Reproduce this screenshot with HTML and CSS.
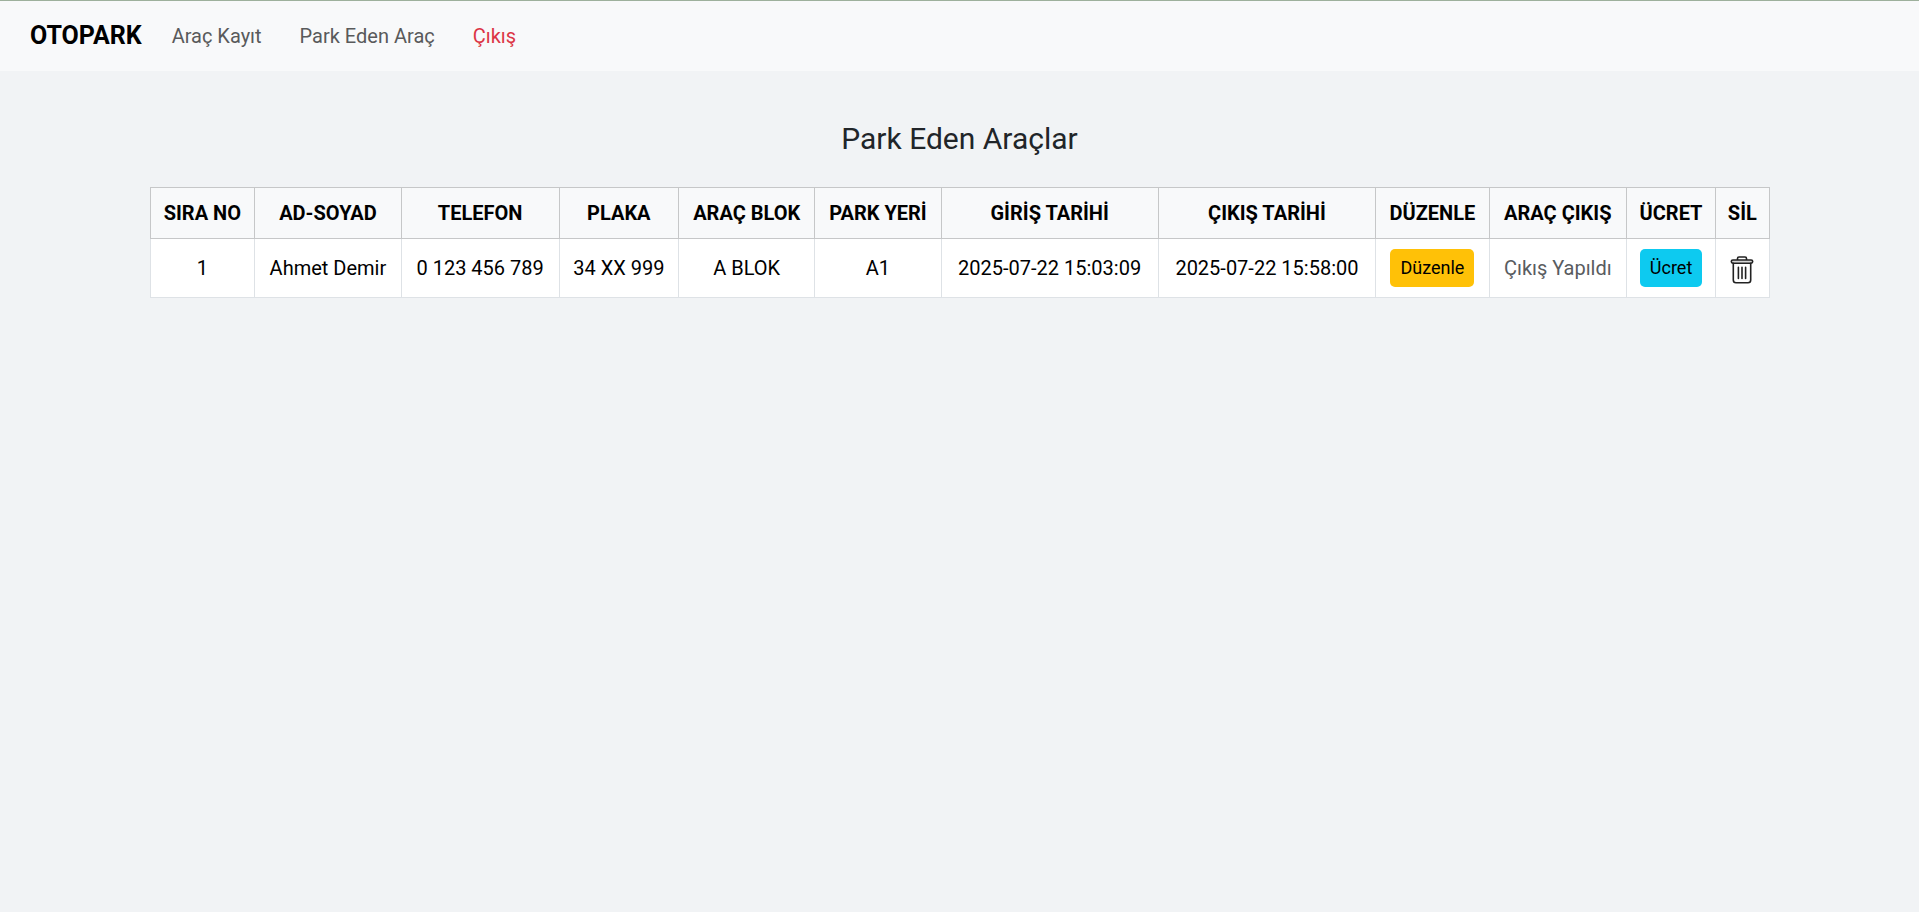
FILE: index.html
```html
<!DOCTYPE html>
<html lang="tr">
<head>
<meta charset="utf-8">
<meta name="viewport" content="width=device-width, initial-scale=1">
<title>Otopark</title>
<link rel="stylesheet" href="styles.css">
</head>
<body>
<nav class="navbar">
  <a class="brand" href="#">OTOPARK</a>
  <ul class="nav-list">
    <li><a class="nav-link" href="#">Araç Kayıt</a></li>
    <li><a class="nav-link" href="#">Park Eden Araç</a></li>
    <li><a class="nav-link nav-link-danger" href="#">Çıkış</a></li>
  </ul>
</nav>
<main class="container">
  <h1 class="title">Park Eden Araçlar</h1>
  <table class="table">
    <thead>
      <tr>
        <th scope="col">SIRA NO</th>
        <th scope="col">AD-SOYAD</th>
        <th scope="col">TELEFON</th>
        <th scope="col">PLAKA</th>
        <th scope="col">ARAÇ BLOK</th>
        <th scope="col">PARK YERİ</th>
        <th scope="col">GİRİŞ TARİHİ</th>
        <th scope="col">ÇIKIŞ TARİHİ</th>
        <th scope="col">DÜZENLE</th>
        <th scope="col">ARAÇ ÇIKIŞ</th>
        <th scope="col">ÜCRET</th>
        <th scope="col">SİL</th>
      </tr>
    </thead>
    <tbody>
      <tr>
        <td>1</td>
        <td>Ahmet Demir</td>
        <td>0 123 456 789</td>
        <td>34 XX 999</td>
        <td>A BLOK</td>
        <td>A1</td>
        <td>2025-07-22 15:03:09</td>
        <td>2025-07-22 15:58:00</td>
        <td><button type="button" class="btn btn-warning">Düzenle</button></td>
        <td><span class="muted">Çıkış Yapıldı</span></td>
        <td><button type="button" class="btn btn-info">Ücret</button></td>
        <td>
          <a class="delete" href="#" aria-label="Sil">
            <svg class="icon" viewBox="1 -1 28 30" fill="none" stroke="#222" stroke-width="1.6" stroke-linecap="round" stroke-linejoin="round" aria-hidden="true">
              <path d="M10.5 5V3.600Q10.500 2 12 2H18Q19.500 2 19.500 3.600V5"/>
              <rect x="4.300" y="5" width="21.400" height="3.200" rx="1.600" fill="#d5d5d5"/>
              <path d="M6.300 8.400V25Q6.300 27.700 9 27.700H21Q23.700 27.700 23.700 25V8.400"/>
              <path d="M11.400 12.300V23.500M15 12.300V23.500M18.600 12.300V23.500"/>
            </svg>
          </a>
        </td>
      </tr>
    </tbody>
  </table>
</main>
</body>
</html>
```
FILE: styles.css
```css
* {
  box-sizing: border-box;
}

body {
  margin: 0;
  background: #f1f3f5;
  color: #212529;
  font-family: Roboto, "Liberation Sans", sans-serif;
  font-size: 20px;
  line-height: 30px;
}

.navbar {
  display: flex;
  align-items: center;
  gap: 11px;
  padding: 10px 30px;
  border-top: 1px solid #9db09c;
  background: #f8f9fa;
}

.brand {
  color: #000;
  font-size: 25px;
  font-weight: 700;
  text-decoration: none;
}

.nav-list {
  display: flex;
  margin: 0;
  padding: 0;
  list-style: none;
}

.nav-link {
  display: block;
  padding: 10px 19px;
  color: #595a5b;
  text-decoration: none;
}

.nav-link-danger {
  color: #dc3545;
}

.container {
  max-width: 1650px;
  margin: 0 auto;
  padding: 50px 15px;
}

.title {
  margin: 0 0 30px;
  font-size: 30px;
  font-weight: 400;
  line-height: 36px;
  text-align: center;
}

.table {
  width: 100%;
  border-collapse: collapse;
  background: #fff;
  color: #000;
  text-align: center;
  white-space: nowrap;
}

.table th,
.table td {
  padding: 10px;
  border: 1px solid #dee2e6;
  vertical-align: middle;
}

.table th {
  border-color: #c6c7c8;
  background: #f8f9fa;
  font-weight: 700;
}

.btn {
  padding: 6px 10px;
  border: 0;
  border-radius: 5px;
  color: #000;
  font-family: inherit;
  font-size: 18px;
  line-height: 26px;
}

.btn-warning {
  background: #ffc107;
}

.btn-info {
  background: #0dcaf0;
}

.muted {
  color: #595c5f;
}

.delete {
  display: inline-block;
  vertical-align: middle;
}

.icon {
  display: block;
  width: 28px;
  height: 30px;
}
```
